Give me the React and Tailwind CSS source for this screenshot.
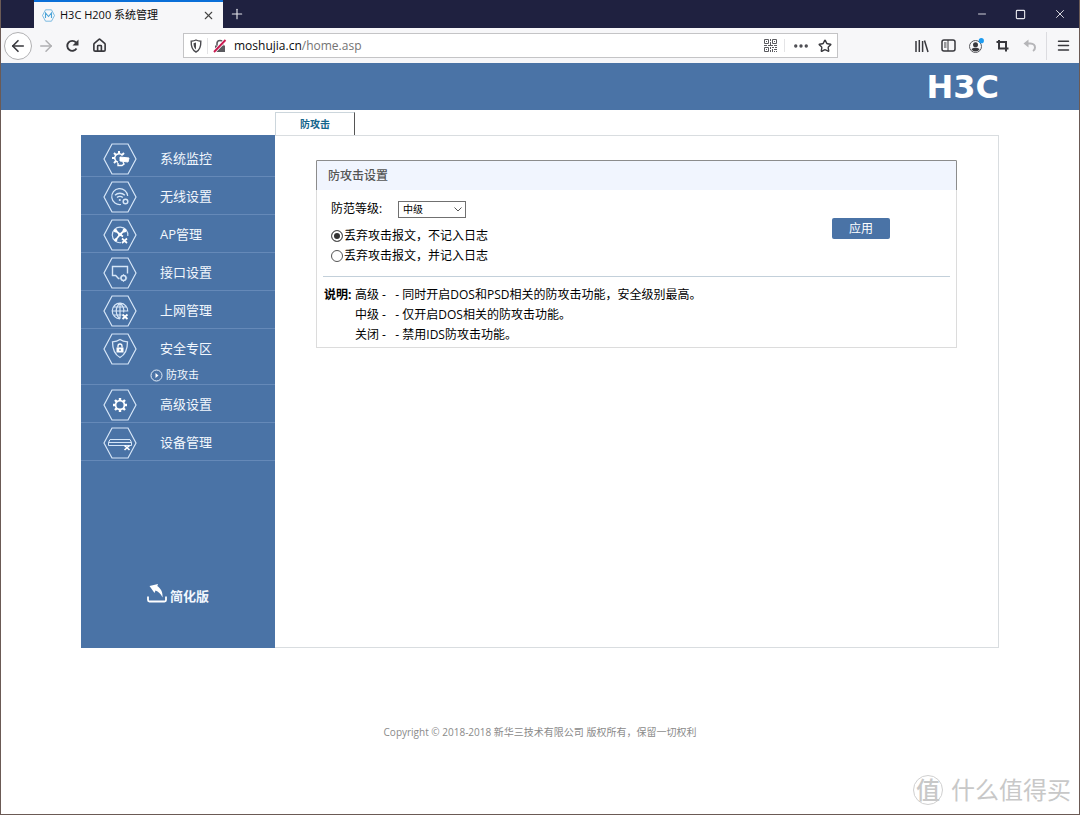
import { Star, Menu, House, ArrowLeft, ArrowRight, Ellipsis, X, Plus, Minus, Square } from "lucide-react";

function Hexagon({ children }) {
  return (
    <svg width="34" height="32" viewBox="0 0 34 32" fill="none" stroke="#d6e6f8" strokeWidth="1.2" className="shrink-0" aria-hidden="true">
      <path d="M1 16 9 1h16l8 15-8 15H9Z" />
      {children}
    </svg>
  );
}

function MonitorIcon() {
  return (
    <Hexagon>
      <g transform="translate(16 15)" stroke="#fff">
        <path d="M3.5-2.5A4.3 4.3 0 1 0-1 4.2" strokeWidth="1.5" />
        <path d="M0-7v2.6M-7 0h2.6M-5-5l1.9 1.9M5-5 3.1-3.1M-5 5l1.9-1.9" strokeWidth="2" />
        <path d="m1-1 9 1-1 4-8-1Z" fill="#fff" strokeWidth="1" />
        <path d="m4 4 1 2-2 1.5H-1V5" strokeWidth="1.4" />
      </g>
    </Hexagon>
  );
}

function WifiIcon() {
  return (
    <Hexagon>
      <path d="M24.7 15A8 8 0 1 0 18 23.5" />
      <path d="M12 14.2a7 7 0 0 1 9.800 0M14 16.600a4.200 4.200 0 0 1 5.800 0" strokeWidth="1.400" />
      <circle cx="16.800" cy="19" r="1.100" fill="#d6e6f8" stroke="none" />
      <circle cx="22.500" cy="20.500" r="2.300" strokeWidth="1.500" />
    </Hexagon>
  );
}

function ApIcon() {
  return (
    <Hexagon>
      <path d="M24.8 17A7.8 7.8 0 1 0 18 23.7" />
      <path d="m12.5 11.5 4.5 4 5-4.5M17 15.5l-4.5 5.5M17 15.5l3 2" strokeWidth="1.7" stroke="#fff" />
      <g fill="#fff" stroke="none">
        <circle cx="12.5" cy="11.8" r="1.8" /><circle cx="21.5" cy="11.5" r="1.9" />
        <circle cx="17" cy="15.5" r="1.8" /><circle cx="12.8" cy="20.8" r="1.6" />
      </g>
      <path d="m19 19.500 5 4.500m0-4.500L19 24" strokeWidth="1.700" stroke="#fff" />
    </Hexagon>
  );
}

function PortIcon() {
  return (
    <Hexagon>
      <path d="M24.500 16.500V9.500h-15v9h3.200l2.800 3h1" strokeWidth="1.400" />
      <circle cx="20.500" cy="21" r="2.500" strokeWidth="1.500" />
      <path d="M20.500 17.300v1M20.500 23.700v1M16.800 21h1M23.200 21h1" />
    </Hexagon>
  );
}

function GlobeIcon() {
  return (
    <Hexagon>
      <path d="M24.8 16.5A7.8 7.8 0 1 0 17 23.8M17 8.2v15.6M9.2 16h15.6M10.5 12h13M10.5 20h8M17 8.2c-5 4-5 11.6 0 15.6M17 8.2c3.5 3 4.3 6.5 3.6 9.3" />
      <path d="m19.5 19.5 5 4.5m0-4.5-5 4.5" strokeWidth="1.8" stroke="#fff" />
    </Hexagon>
  );
}

function ShieldLockIcon() {
  return (
    <Hexagon>
      <path d="M17 6.5c2 1.6 4.5 2.3 7.5 2.3 0 7.2-1.5 12.5-7.5 15.7-6-3.2-7.5-8.5-7.5-15.7 3 0 5.5-.7 7.5-2.3Z" strokeWidth="1.3" />
      <path d="M13.5 14.5h7v5h-7Z" fill="#fff" stroke="none" />
      <path d="M15 14.5V13a2 2 0 0 1 4 0v1.5" stroke="#fff" strokeWidth="1.3" />
      <path d="M17 16v2" stroke="#4a73a8" />
    </Hexagon>
  );
}

function CogIcon() {
  return (
    <Hexagon>
      <g transform="translate(17 16)" stroke="#fff">
        <circle r="4.4" strokeWidth="1.7" />
        <path d="M0-7v2.500M0 7V4.500M-7 0h2.500M7 0H4.500M-5-5l1.800 1.800M5 5 3.200 3.200M-5 5l1.800-1.800M5-5 3.200-3.200" strokeWidth="2.400" />
      </g>
    </Hexagon>
  );
}

function DeviceIcon() {
  return (
    <Hexagon>
      <path d="M7 12.5h20l1.5 3v3h-23v-3ZM5.5 15.500h23" strokeWidth="1" />
      <path d="m21.5 18.500 5 4.500m0-4.500-5 4.500" strokeWidth="1.600" stroke="#fff" />
    </Hexagon>
  );
}

const menu = [
  { label: "系统监控", Icon: MonitorIcon },
  { label: "无线设置", Icon: WifiIcon },
  { label: "AP管理", Icon: ApIcon },
  { label: "接口设置", Icon: PortIcon },
  { label: "上网管理", Icon: GlobeIcon },
  { label: "安全专区", Icon: ShieldLockIcon, child: "防攻击" },
  { label: "高级设置", Icon: CogIcon },
  { label: "设备管理", Icon: DeviceIcon },
];

function ToolButton({ label, children }) {
  return (
    <button type="button" aria-label={label} className="relative flex h-7 w-[27px] shrink-0 items-center justify-center text-[#38383d]">
      {children}
    </button>
  );
}

function TitleBar() {
  return (
    <div className="flex h-7 items-stretch bg-[#1f2140] pl-[33px] text-[#e4e4ea]">
      <div className="flex w-[189px] items-center border-t-2 border-[#0a6fd8] bg-[#f7f7f9] pl-2 pr-2 text-[#0c0c0d]">
        <svg width="13" height="13" viewBox="0 0 13 13" fill="none" stroke="#4ba3d8" aria-hidden="true">
          <path d="M3.500.8h6l3 5.700-3 5.700h-6l-3-5.700Z" strokeWidth=".7" />
          <path d="M3.500 9V4l3 3.500 3-3.500v5" strokeWidth="1.100" />
        </svg>
        <span className="ml-[5px] flex-1 whitespace-nowrap text-[11px]">H3C H200 系统管理</span>
        <button type="button" aria-label="关闭标签页"><X size={13} strokeWidth={2} className="text-[#444]" /></button>
      </div>
      <button type="button" aria-label="新建标签页" className="flex w-7 items-center justify-center"><Plus size={16} strokeWidth={1.7} /></button>
      <div className="ml-auto flex">
        <button type="button" aria-label="最小化" className="flex w-[39px] items-center justify-center"><Minus size={12} strokeWidth={1.8} /></button>
        <button type="button" aria-label="最大化" className="flex w-[39px] items-center justify-center"><Square size={11} strokeWidth={2.5} /></button>
        <button type="button" aria-label="关闭" className="flex w-[39px] items-center justify-center"><X size={14} strokeWidth={1.6} /></button>
      </div>
    </div>
  );
}

function Toolbar() {
  return (
    <div className="flex h-[35px] items-center bg-[#f7f7f9] pl-[3px] pr-0.5">
      <button type="button" aria-label="后退" className="flex size-7 shrink-0 items-center justify-center rounded-full border border-[#b1b1b3] bg-white text-[#38383d]"><ArrowLeft size={18} strokeWidth={2.2} /></button>
      <ToolButton label="前进"><ArrowRight size={18} className="text-[#b0b0b2]" /></ToolButton>
      <ToolButton label="刷新">
        <svg width="15" height="14" viewBox="0 0 15 14" fill="none" stroke="#38383d" aria-hidden="true"><path d="M11.500 9.500A5 5 0 1 1 11 3.500" strokeWidth="1.900" /><path d="M13.500.5v6h-6Z" fill="#38383d" stroke="none" /></svg>
      </ToolButton>
      <ToolButton label="主页"><House size={15} strokeWidth={2.6} /></ToolButton>
      <div className="mx-[70px] flex h-[25px] flex-1 items-center border border-[#c4c4c6] bg-white">
        <span className="flex w-6 justify-center border-r border-[#e4e4e6]">
          <svg width="14" height="16" viewBox="0 0 14 16" fill="none" stroke="#4a4a4f" aria-hidden="true">
            <path d="M7 2c1.500.8 3 1 4.800 1.200C12 8 11 12 7 14 3 12 2 8 2.200 3.200 4 3 5.500 2.800 7 2Z" strokeWidth="1.400" />
            <path d="M7 4.500v7C5 10 4.500 7.500 4.500 5.200Z" fill="#4a4a4f" stroke="none" />
          </svg>
        </span>
        <svg width="14" height="14" viewBox="0 0 14 14" fill="none" className="ml-[5px] shrink-0" aria-hidden="true">
          <path d="M2 6.500h10V13H2Z" fill="#5a5a5f" />
          <path d="M4 6.500V4.500a3 3 0 0 1 6 0v2" stroke="#5a5a5f" strokeWidth="1.600" />
          <path d="M1 13 12.500 1" stroke="#fff" strokeWidth="3.500" />
          <path d="M1 13 12.500 1" stroke="#c8194f" strokeWidth="1.900" />
        </svg>
        <a href="#home" className="ml-[7px] flex-1 whitespace-nowrap text-xs leading-5 text-[#737373]">
          <span className="text-[#0c0c0d]">moshujia.cn</span>/home.asp
        </a>
        <button type="button" aria-label="二维码" className="flex w-6 justify-center border-r border-[#e4e4e6] pr-1">
          <svg width="13" height="13" viewBox="0 0 13 13" fill="none" stroke="#5a5a5f" aria-hidden="true">
            <path d="M.5.5h4v4h-4ZM8.500.5h4v4h-4ZM.5 8.500h4v4h-4Z" />
            <path d="M2 2.500h1M10 2.500h1M2 10.500h1M6.500 0v2M6.500 3v3M0 6.500h3M4 6.500h5M10 6.500h3M6.500 8v2M6.500 11v2M8 8.500h2M11 8.500h2M8.500 10v3M10 10.500h3M10 12.500h1M12 12.500h1" />
          </svg>
        </button>
        <button type="button" aria-label="更多" className="flex w-7 justify-center pl-1"><Ellipsis size={18} strokeWidth={2.500} className="text-[#4a4a4f]" /></button>
        <button type="button" aria-label="收藏" className="flex w-6 justify-center"><Star size={14} strokeWidth={2.400} className="text-[#38383d]" /></button>
      </div>
      <ToolButton label="书架">
        <svg width="15" height="14" viewBox="0 0 15 14" fill="none" stroke="#38383d" strokeWidth="1.500" aria-hidden="true"><path d="M2 2v11M5.300 1v12M8.600 2v11M10.500 1.500 14 13" /></svg>
      </ToolButton>
      <ToolButton label="侧栏">
        <svg width="15" height="13" viewBox="0 0 15 13" fill="none" stroke="#38383d" aria-hidden="true"><rect x="1" y="1" width="13" height="11" rx="2" strokeWidth="1.500" /><path d="M7 1v11M3 4h2.500M3 6h2.500M3 8h2.500" /></svg>
      </ToolButton>
      <ToolButton label="账户">
        <svg width="16" height="16" viewBox="0 0 16 16" fill="none" aria-hidden="true"><circle cx="7.500" cy="8.500" r="6" stroke="#5a5a5f" /><circle cx="7.500" cy="6.800" r="2.500" fill="#38383d" /><path d="M3.500 11.500C4 9 11 9 11.500 11.500 9.500 14 5.500 14 3.500 11.500Z" fill="#38383d" /><circle cx="13.300" cy="2.700" r="2.600" fill="#1d9bf0" /></svg>
      </ToolButton>
      <ToolButton label="截图">
        <svg width="13" height="13" viewBox="0 0 13 13" fill="none" stroke="#38383d" strokeWidth="2" aria-hidden="true"><path d="M3 1v8.500h9.500M.5 3H10v9.500" /></svg>
      </ToolButton>
      <ToolButton label="撤销">
        <svg width="14" height="13" viewBox="0 0 14 13" fill="none" aria-hidden="true"><path d="M.5 4.500 5.500.5v8Z" fill="#b5b5b8" /><path d="M4 4.500h3.500c3 0 4.500 2 4.500 4 0 1.500-.8 2.800-2 3.500" stroke="#b5b5b8" strokeWidth="2" /></svg>
      </ToolButton>
      <div className="ml-[3px] h-7 w-px bg-[#dcdce0]" />
      <div className="pl-[3px]"><ToolButton label="菜单"><Menu size={15} strokeWidth={2.4} /></ToolButton></div>
    </div>
  );
}

function Sidebar() {
  return (
    <nav className="flex w-[194px] shrink-0 flex-col bg-[#4a73a6] pt-1 text-[#f2f7fd]">
      <ul>
        {menu.map(({ label, Icon, child }) => (
          <li key={label} className="border-b border-[#6589b8]">
            <a href="#menu" className="flex h-[37px] items-center pl-[22px] pt-0.5 text-[13px]">
              <Icon />
              <span className="ml-[23px]">{label}</span>
            </a>
            {child && (
              <a href="#attack" className="flex h-[18px] items-center pl-[69px] text-[11px]">
                <svg width="13" height="13" viewBox="0 0 13 13" fill="none" stroke="#e3eefa" aria-hidden="true">
                  <circle cx="6.500" cy="6.500" r="5.500" /><path d="m5.500 4 3 2.500-3 2.500Z" fill="#fff" stroke="none" />
                </svg>
                <span className="ml-[3px]">{child}</span>
              </a>
            )}
          </li>
        ))}
      </ul>
      <a href="#simple" className="mb-[42px] mt-auto flex items-center pl-[66px] text-[13px] font-bold leading-5">
        <svg width="20" height="20" viewBox="0 0 20 20" fill="none" stroke="#fff" aria-hidden="true">
          <path d="M1 12.500v3.500q0 1.500 1.500 1.500h15q1.500 0 1.500-1.500v-3.500" strokeWidth="1.800" />
          <path d="M2.500 2 11 0l-.7 2C14 4.500 16 8.500 15.500 13.500 13.500 9.500 11.500 7.500 8.500 6.500L7.500 9Z" fill="#fff" stroke="none" />
        </svg>
        <span className="ml-[3px] pt-1">简化版</span>
      </a>
    </nav>
  );
}

function Settings() {
  return (
    <section className="border border-[#dcdcdc] border-t-[#8c8c8c] text-xs text-black">
      <h2 className="-mx-px flex h-[29px] items-center border-x border-[#8c8c8c] bg-[#f1f5fe] pl-[11px] font-medium text-[#555]">防攻击设置</h2>
      <form className="mx-1.5" onSubmit={(e) => e.preventDefault()}>
        <div className="flex items-start justify-between border-b border-[#c3d0da] pb-2.5 pl-2 pr-[60px] pt-2.5">
          <div>
            <div className="flex h-[18px] items-center">
              <label htmlFor="level" className="w-[67px]">防范等级:</label>
              <span className="relative flex">
                <select id="level" defaultValue="中级" className="h-[17px] w-[68px] appearance-none border border-[#707070] bg-white pl-1 text-[10px] leading-[15px]">
                  <option>高级</option>
                  <option>中级</option>
                  <option>关闭</option>
                </select>
                <svg width="8" height="5" viewBox="0 0 8 5" fill="none" stroke="#555" className="pointer-events-none absolute right-1 top-1.5" aria-hidden="true"><path d="m.5.5 3.500 3.500L7.500.5" /></svg>
              </span>
            </div>
            <div className="mt-2 flex flex-col">
              {["丢弃攻击报文，不记入日志", "丢弃攻击报文，并记入日志"].map((text, i) => (
                <label key={text} className="flex h-5 items-center gap-px">
                  <input type="radio" name="log" defaultChecked={i === 0} className="size-3 appearance-none rounded-full border border-[#555] bg-white checked:bg-[#333] checked:shadow-[inset_0_0_0_2px_white]" />
                  {text}
                </label>
              ))}
            </div>
          </div>
          <button type="submit" className="mt-[18px] h-[21px] w-[58px] rounded-xs bg-[#4a73a6] text-white">应用</button>
        </div>
      </form>
      <div className="flex whitespace-nowrap pb-0.5 pl-[7px] pt-2 leading-5">
        <strong className="w-[31px]">说明:</strong>
        <div>
          <p>高级 -&nbsp;&nbsp; - 同时开启DOS和PSD相关的防攻击功能，安全级别最高。</p>
          <p>中级 -&nbsp;&nbsp; - 仅开启DOS相关的防攻击功能。</p>
          <p>关闭 -&nbsp;&nbsp; - 禁用IDS防攻击功能。</p>
        </div>
      </div>
    </section>
  );
}

export default function App() {
  return (
    <div className="relative flex min-h-screen flex-col border-x border-b border-[#6b5a55] bg-white font-['Open_Sans','Noto_Sans_CJK_SC',sans-serif]">
      <TitleBar />
      <Toolbar />
      <header className="flex h-[47px] items-center justify-end bg-[#4a73a6] pr-20">
        <div className="font-['DejaVu_Sans',sans-serif] text-[32px] font-bold leading-none text-white">H3C</div>
      </header>
      <div className="px-20 pt-0.5">
        <div className="flex pl-[194px]">
          <a href="#attack" className="flex h-[23px] w-20 items-center justify-center border-l border-r border-t border-[#ccd6dc] border-r-[#555] text-[10px] font-bold text-[#14658c]">防攻击</a>
        </div>
        <div className="flex min-h-[513px]">
          <Sidebar />
          <main className="min-w-0 flex-1 border-b border-r border-t border-[#d9dde0] px-[41px] pt-6">
            <Settings />
          </main>
        </div>
      </div>
      <footer className="mt-[74px] text-center text-[10px] leading-5 text-[#8a8a8a]">
        Copyright © 2018-2018 新华三技术有限公司 版权所有，保留一切权利
      </footer>
      <div className="absolute bottom-2 right-2 flex items-center gap-2 text-2xl leading-8 text-[#c8c8c8]">
        <span className="flex size-[30px] items-center justify-center rounded-full border border-[#d0d0d0] font-medium">值</span>
        <span>什么值得买</span>
      </div>
    </div>
  );
}
